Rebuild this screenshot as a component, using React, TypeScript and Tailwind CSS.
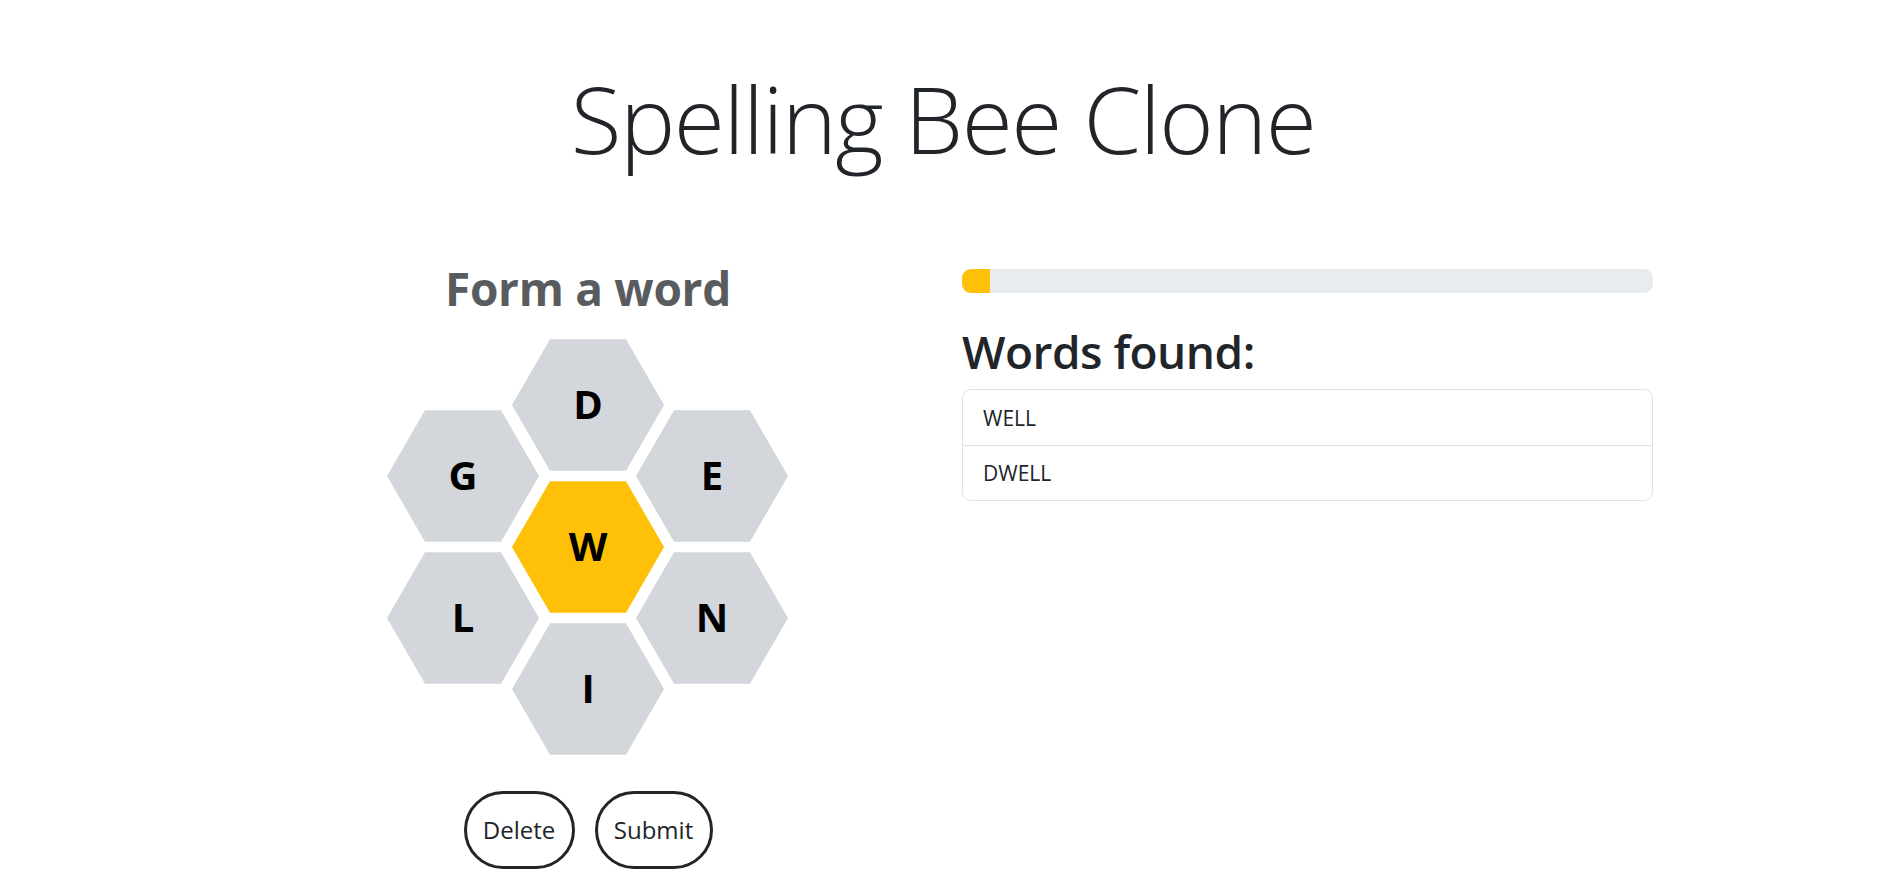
const letters = [
  { ch: "D", x: 201, y: 66 },
  { ch: "G", x: 76, y: 137 },
  { ch: "E", x: 325, y: 137 },
  { ch: "W", x: 201, y: 208, center: true },
  { ch: "L", x: 76, y: 279 },
  { ch: "N", x: 325, y: 279 },
  { ch: "I", x: 201, y: 350 },
];

const words = ["WELL", "DWELL"];

function hexPoints(cx: number, cy: number) {
  const r = 76;
  const h = 65.8;
  return [
    [cx - r, cy],
    [cx - r / 2, cy - h],
    [cx + r / 2, cy - h],
    [cx + r, cy],
    [cx + r / 2, cy + h],
    [cx - r / 2, cy + h],
  ]
    .map((p) => p.join(","))
    .join(" ");
}

function Hive() {
  return (
    <svg width="402" height="418" viewBox="0 0 402 418" className="block">
      {letters.map((l) => (
        <g key={l.ch}>
          <polygon points={hexPoints(l.x, l.y)} fill={l.center ? "#ffc107" : "#d3d6da"} />
          <text
            x={l.x}
            y={l.y + 14}
            textAnchor="middle"
            fontSize="40"
            fontWeight="700"
            fill="#000"
            fontFamily="'Open Sans', sans-serif"
          >
            {l.ch}
          </text>
        </g>
      ))}
    </svg>
  );
}

export default function App() {
  return (
    <div className="min-h-screen bg-white font-['Open_Sans',sans-serif] text-[#212529]">
      {/* Titre */}
      <h1 className="pt-[61px] text-center text-[93px] font-light leading-[115px] tracking-[-1.5px]">
        Spelling Bee Clone
      </h1>

      <div className="mx-auto mt-[83px] flex w-[1710px]">
        {/* Colonne gauche : ruche */}
        <div className="ml-[290px] flex w-[420px] flex-col items-center">
          <h2 className="text-[46px] font-bold leading-[58px] tracking-[-0.3px] text-[#595c5f]">Form a word</h2>
          <div className="mt-[22px]">
            <Hive />
          </div>
          <div className="mt-[34px] flex gap-[20px]">
            <button className="h-[78px] w-[111px] rounded-full border-[3px] border-[#212529] text-[24px] leading-[36px]">
              Delete
            </button>
            <button className="h-[78px] w-[118px] rounded-full border-[3px] border-[#212529] text-[24px] leading-[36px]">
              Submit
            </button>
          </div>
        </div>

        {/* Colonne droite : progression + mots */}
        <div className="ml-[164px] w-[691px] pt-[10px]">
          <div className="h-[24px] w-full overflow-hidden rounded-[9px] bg-[#e9ecef]">
            <div className="h-full w-[28px] bg-[#ffc107]" />
          </div>
          <h2 className="mt-[29px] text-[46px] font-semibold leading-[58px] tracking-[-0.5px]">Words found:</h2>
          <ul className="mt-[9px] overflow-hidden rounded-[9px] border border-[#dee2e6]">
            {words.map((w, i) => (
              <li
                key={w}
                className={`flex h-[55px] items-center px-[20px] text-[21px] leading-[32px] ${
                  i > 0 ? "border-t border-[#dee2e6]" : ""
                }`}
              >
                {w}
              </li>
            ))}
          </ul>
        </div>
      </div>
    </div>
  );
}
